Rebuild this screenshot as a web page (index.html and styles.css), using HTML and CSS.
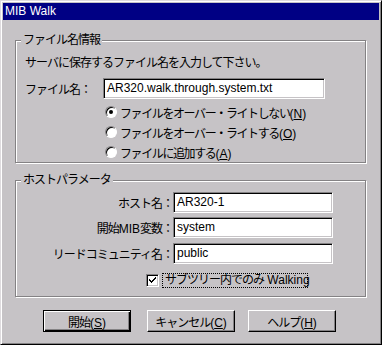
FILE: index.html
```html
<!DOCTYPE html>
<html lang="ja">
<head>
<meta charset="utf-8">
<title>MIB Walk</title>
<link rel="stylesheet" href="styles.css">
</head>
<body>
<div class="window">
  <div class="titlebar">MIB Walk</div>
  <div class="client">
    <div class="group g1">
      <div class="legend jp">ファイル名情報</div>
      <div class="intro jp">サーバに保存するファイル名を入力して下さい。</div>
      <div class="filerow">
        <span class="flabel jp">ファイル名：</span>
        <div class="input wide">AR320.walk.through.system.txt</div>
      </div>
      <div class="radiorow"><span class="radio on"></span><span class="jp opt">ファイルをオーバー・ライトしない<span class="lat">(<u>N</u>)</span></span></div>
      <div class="radiorow"><span class="radio"></span><span class="jp opt">ファイルをオーバー・ライトする<span class="lat">(<u>O</u>)</span></span></div>
      <div class="radiorow"><span class="radio"></span><span class="jp opt">ファイルに追加する<span class="lat">(<u>A</u>)</span></span></div>
    </div>
    <div class="group g2">
      <div class="legend jp">ホストパラメータ</div>
      <div class="hrow first"><span class="hlabel jp">ホスト名：</span><div class="input host">AR320-1</div></div>
      <div class="hrow second"><span class="hlabel jp">開始<span class="lat">MIB</span>変数：</span><div class="input host">system</div></div>
      <div class="hrow third"><span class="hlabel jp">リードコミュニティ名：</span><div class="input host">public</div></div>
      <div class="checkrow">
        <span class="checkbox"><svg width="7" height="7" viewBox="0 0 7 7"><path d="M0 2h1v1h1v1h1V3h1V2h1V1h1V0h1v2H6v1H5v1H4v1H3v1H2V5H1V4H0z" fill="#000"/></svg></span>
        <span class="focus jp">サブツリー内でのみ<span class="lat"> Walking</span></span>
      </div>
    </div>
    <div class="buttons">
      <button class="btn default jp">開始<span class="lat">(<u>S</u>)</span></button>
      <button class="btn cancel jp">キャンセル<span class="lat">(<u>C</u>)</span></button>
      <button class="btn help jp">ヘルプ<span class="lat">(<u>H</u>)</span></button>
    </div>
  </div>
</div>
</body>
</html>
```
FILE: styles.css
```css
html, body {
  margin: 0;
  padding: 0;
  background: #c6c3c6;
}
body {
  font-family: "Liberation Sans", "Noto Sans CJK JP", sans-serif;
  font-size: 12px;
  color: #000;
}
.window {
  box-sizing: border-box;
  width: 382px;
  height: 345px;
  background: #c6c3c6;
  border: 1px solid;
  border-color: #dedbde #000 #000 #dedbde;
  box-shadow: inset 1px 1px 0 #fff, inset -1px -1px 0 #848284;
  padding: 2px;
  display: flex;
  flex-direction: column;
}
.titlebar {
  height: 17px;
  line-height: 17px;
  background: #000084;
  color: #fff;
  padding-left: 2px;
  font-size: 12px;
}
.jp {
  letter-spacing: -1px;
}
.opt {
  letter-spacing: -1.4px;
}
.lat {
  letter-spacing: 0;
}
.client {
  padding: 20px 0 0 12px;
  display: flex;
  flex-direction: column;
}
.group {
  position: relative;
  box-sizing: border-box;
  width: 351px;
  border: 1px solid #848284;
  box-shadow: inset 1px 1px 0 #fff, 1px 1px 0 #fff;
  padding-left: 9px;
  display: flex;
  flex-direction: column;
}
.g1 {
  height: 123px;
  padding-top: 14px;
}
.g2 {
  height: 117px;
  margin-top: 17px;
  padding-top: 11px;
}
.legend {
  position: absolute;
  left: 5px;
  top: -8px;
  height: 14px;
  line-height: 14px;
  padding: 0 2px;
  background: #c6c3c6;
}
.intro {
  height: 16px;
  line-height: 16px;
}
.filerow {
  margin-top: 7px;
  display: flex;
  align-items: center;
  height: 21px;
}
.flabel {
  width: 78px;
}
.input {
  box-sizing: border-box;
  height: 21px;
  line-height: 17px;
  background: #fff;
  border: 1px solid;
  border-color: #848284 #fff #fff #848284;
  box-shadow: inset 1px 1px 0 #000, inset -1px -1px 0 #c6c3c6;
  padding: 1px 3px;
  white-space: nowrap;
  overflow: hidden;
}
.wide {
  width: 222px;
}
.radiorow {
  height: 20px;
  display: flex;
  align-items: center;
  padding-left: 80px;
  gap: 3px;
}
.filerow + .radiorow {
  margin-top: 3px;
}
.radio {
  box-sizing: border-box;
  width: 12px;
  height: 12px;
  border-radius: 50%;
  background: #fff;
  border: 1px solid;
  border-color: #848284 #fff #fff #848284;
  box-shadow: inset 1px 1px 0 #000;
  display: flex;
  align-items: center;
  justify-content: center;
}
.radio.on::after {
  content: "";
  width: 4px;
  height: 4px;
  border-radius: 50%;
  background: #000;
}
.hrow {
  display: flex;
  align-items: center;
  height: 21px;
}
.second { margin-top: 4px; }
.third { margin-top: 5px; }
.hlabel {
  width: 148px;
  text-align: right;
  white-space: nowrap;
}
.host {
  width: 160px;
}
.checkrow {
  margin-top: 9px;
  height: 15px;
  display: flex;
  align-items: center;
  padding-left: 121px;
}
.checkbox {
  box-sizing: border-box;
  width: 13px;
  height: 13px;
  background: #fff;
  border: 1px solid;
  border-color: #848284 #fff #fff #848284;
  box-shadow: inset 1px 1px 0 #000, inset -1px -1px 0 #c6c3c6;
  display: flex;
  align-items: center;
  justify-content: center;
}
.focus {
  margin-left: 3px;
  height: 15px;
  line-height: 13px;
  box-sizing: border-box;
  border: 1px dotted #000;
  padding: 0 2px;
  width: 146px;
  white-space: pre;
}
.buttons {
  margin-top: 13px;
  display: flex;
  padding-left: 28px;
}
.btn {
  box-sizing: border-box;
  width: 88px;
  height: 22px;
  margin: 0;
  padding: 0;
  font: inherit;
  font-size: 12px;
  color: #000;
  background: #c6c3c6;
  border: 1px solid;
  border-color: #fff #000 #000 #fff;
  box-shadow: inset -1px -1px 0 #848284;
}
.btn.default {
  border-color: #000;
  box-shadow: inset 1px 1px 0 #fff, inset -1px -1px 0 #000, inset -2px -2px 0 #848284;
}
.cancel { margin-left: 16px; }
.help { margin-left: 13px; }
u { text-decoration: underline; }
```
